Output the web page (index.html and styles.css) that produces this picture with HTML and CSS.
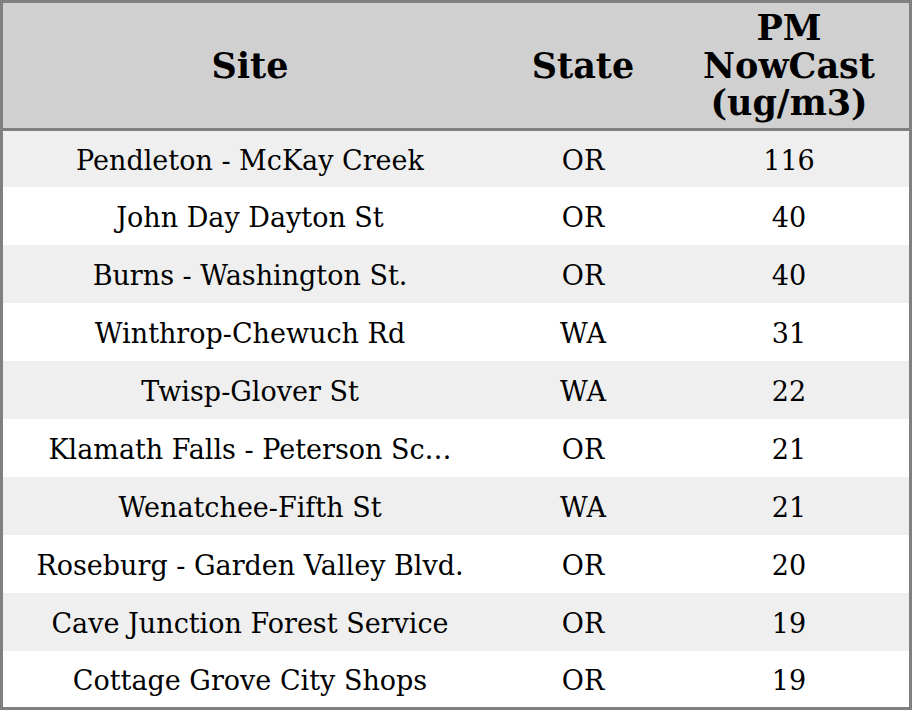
FILE: index.html
```html
<!DOCTYPE html>
<html>
<head>
<meta charset="utf-8">
<link rel="stylesheet" href="styles.css">
</head>
<body>
<table class="aq">
  <colgroup>
    <col class="c-site"><col class="c-state"><col class="c-pm">
  </colgroup>
  <thead>
    <tr><th>Site</th><th>State</th><th>PM<br>NowCast<br>(ug/m3)</th></tr>
  </thead>
  <tbody>
    <tr><td>Pendleton - McKay Creek</td><td>OR</td><td>116</td></tr>
    <tr><td>John Day Dayton St</td><td>OR</td><td>40</td></tr>
    <tr><td>Burns - Washington St.</td><td>OR</td><td>40</td></tr>
    <tr><td>Winthrop-Chewuch Rd</td><td>WA</td><td>31</td></tr>
    <tr><td>Twisp-Glover St</td><td>WA</td><td>22</td></tr>
    <tr><td>Klamath Falls - Peterson Sc…</td><td>OR</td><td>21</td></tr>
    <tr><td>Wenatchee-Fifth St</td><td>WA</td><td>21</td></tr>
    <tr><td>Roseburg - Garden Valley Blvd.</td><td>OR</td><td>20</td></tr>
    <tr><td>Cave Junction Forest Service</td><td>OR</td><td>19</td></tr>
    <tr><td>Cottage Grove City Shops</td><td>OR</td><td>19</td></tr>
  </tbody>
</table>
</body>
</html>
```
FILE: styles.css
```css
html, body {
  margin: 0;
  padding: 0;
  background: #ffffff;
}
.aq {
  width: 912px;
  border-collapse: separate;
  border-spacing: 0;
  border: 3px solid #808080;
  table-layout: fixed;
  font-family: "DejaVu Serif", serif;
  color: #000;
}
.c-site { width: 494px; }
.c-state { width: 172px; }
.c-pm { width: 240px; }
.aq th {
  background: #d0d0d0;
  font-size: 35px;
  font-weight: bold;
  line-height: 37.5px;
  height: 125px;
  padding: 0;
  text-align: center;
  vertical-align: middle;
  border-bottom: 3px solid #808080;
}
.aq td {
  font-size: 27px;
  line-height: 30px;
  height: 54px;
  padding: 4px 0 0 0;
  text-align: center;
  vertical-align: middle;
  white-space: nowrap;
}
.aq tbody tr:first-child td,
.aq tbody tr:last-child td {
  height: 52px;
}
.aq tbody tr:nth-child(odd) td {
  background: #efefef;
}
```
